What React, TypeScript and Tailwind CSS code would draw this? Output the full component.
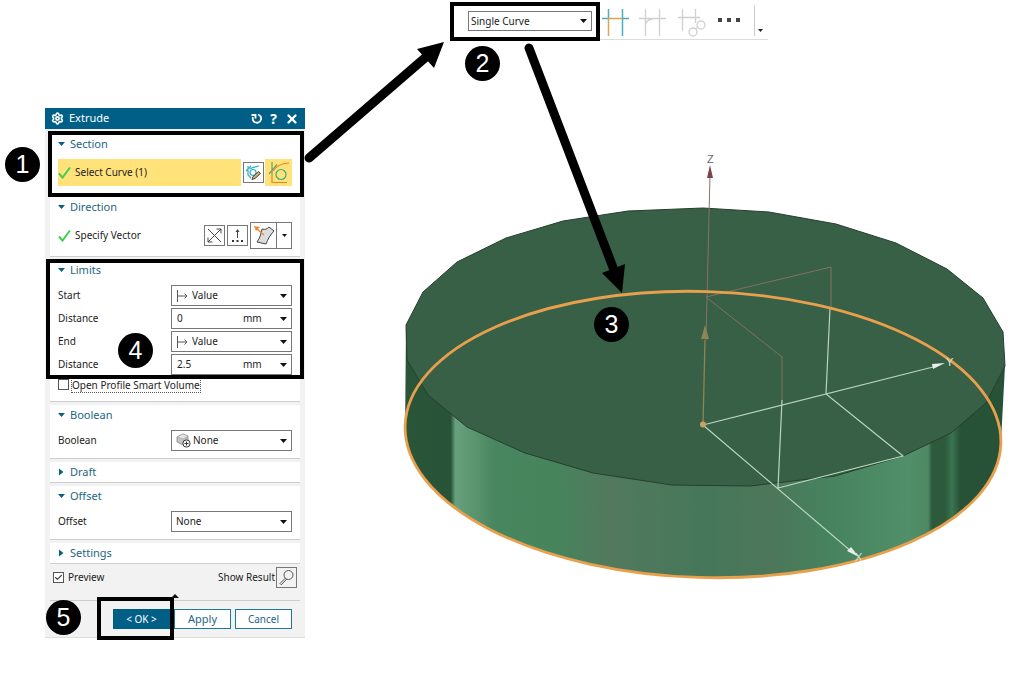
import React, { useState } from 'react';
import { Settings, X, Check } from 'lucide-react';

type SectionProps = {
  title: string;
  open?: boolean;
  children?: React.ReactNode;
};

const Section: React.FC<SectionProps> = ({ title, open = false, children }) => (
  <section className="bg-white border-b border-[#cfcfcf] px-2">
    <h2>
      <button className="flex items-center gap-[5px] h-5 text-[11px] text-[#1d6580]" aria-expanded={open}>
        <svg width="7" height="8" viewBox="0 0 7 8" fill="#0b5f80" aria-hidden="true">
          {open ? <path d="M0 2h7L3.500 6z" /> : <path d="M1 0.500v7L5.500 4z" />}
        </svg>
        {title}
      </button>
    </h2>
    {open && <div className="pt-[5px] pb-[7px]">{children}</div>}
  </section>
);

const Caret: React.FC = () => (
  <svg width="7" height="4" viewBox="0 0 7 4" className="shrink-0" aria-hidden="true">
    <path d="M0 0h7L3.500 4z" fill="#111" />
  </svg>
);

const Tick: React.FC = () => (
  <svg width="13" height="13" viewBox="0 0 13 13" fill="none" className="shrink-0" aria-hidden="true">
    <path d="M1 7.500l3.500 4L12 1.500" stroke="#3fce4c" strokeWidth="2" />
  </svg>
);

type DropDownProps = {
  id: string;
  label?: string;
  options: string[];
  icon?: React.ReactNode;
  className?: string;
};

const DropDown: React.FC<DropDownProps> = ({ id, label, options, icon, className = 'w-[121px] h-[21px] pl-1' }) => (
  <div className={`relative flex items-center bg-white border border-[#777] ${className}`}>
    {icon}
    <select id={id} aria-label={label} className="appearance-none flex-1 min-w-0 h-full bg-transparent outline-none">
      {options.map((o) => (
        <option key={o}>{o}</option>
      ))}
    </select>
    <span className="absolute right-1 pointer-events-none flex">
      <Caret />
    </span>
  </div>
);

const ValueIcon = () => (
  <svg width="12" height="14" viewBox="0 0 12 14" fill="none" stroke="#555" className="mr-1 shrink-0">
    <path d="M1.500 1v12M2 7h9M8.500 4.500l2.500 2.500-2.500 2.500" />
  </svg>
);

const CubeIcon = () => (
  <svg width="15" height="15" viewBox="0 0 15 15" className="mr-[2px] shrink-0">
    <path d="M1 4l6-3 5 2v6l-5 3-6-3z" fill="#c4c4c4" stroke="#888" strokeWidth=".8" />
    <path d="M1 4l6-3 5 2-5 3z" fill="#e6e6e6" stroke="#999" strokeWidth=".6" />
    <circle cx="10.500" cy="10.500" r="3.600" fill="#fff" stroke="#333" />
    <path d="M8.500 10.500h4M10.500 8.500v4" stroke="#333" />
  </svg>
);

const SketchIcon = () => (
  <svg width="17" height="17" viewBox="0 0 17 17" fill="none">
    <path d="M1 7l5-5M3 2v9l3 3M5 5c3-2 5-2 9-3" stroke="#2fb0cc" strokeWidth="1.200" />
    <circle cx="8" cy="8.500" r="3" stroke="#2fb0cc" strokeWidth="1.200" />
    <path d="M7 15.500l1-3 5.500-5 2 2-5.500 5z" fill="#c9b36a" stroke="#333" strokeWidth=".9" />
  </svg>
);

const CurveIcon = () => (
  <svg width="27" height="27" viewBox="0 0 27 27" fill="none" strokeWidth="1.200">
    <path d="M7 16v7.500h15M8 12c3-5 8-7.500 16-8" stroke="#ef8424" />
    <path d="M4 15l8-9.500M7 3v13" stroke="#6fa067" />
    <circle cx="16" cy="15.500" r="5" stroke="#3da982" />
  </svg>
);

const DistanceField: React.FC<{ id: string; initial: string }> = ({ id, initial }) => {
  const [value, setValue] = useState(initial);
  return (
    <div className="flex items-center w-[121px] h-[21px] border border-[#777] bg-white pl-[5px] pr-1">
      <input id={id} value={value} onChange={(e) => setValue(e.target.value)} className="w-[66px] outline-none" />
      <span className="flex-1">mm</span>
      <button aria-label="Distance options">
        <Caret />
      </button>
    </div>
  );
};

const Field: React.FC<{ id: string; label: string; children: React.ReactNode }> = ({ id, label, children }) => (
  <div className="flex items-center justify-between">
    <label htmlFor={id}>{label}</label>
    {children}
  </div>
);

const Badge: React.FC<{ n: number; className: string }> = ({ n, className }) => (
  <span
    className={`absolute flex items-center justify-center size-[35px] rounded-full bg-black text-white text-[25px] font-['Liberation_Sans',sans-serif] ${className}`}
  >
    {n}
  </span>
);

const ExtrudeDialog: React.FC = () => {
  const [openProfile, setOpenProfile] = useState(false);
  const [preview, setPreview] = useState(true);

  return (
    <div role="dialog" aria-label="Extrude" className="relative w-[260px] bg-[#f2f2f2] border-b border-[#ddd]">
      <header className="flex items-center h-[21px] bg-[#005f87] text-white px-[6px]">
        <Settings size={13} strokeWidth={3} />
        <h1 className="ml-[5px] text-[11px] flex-1">Extrude</h1>
        <div className="flex items-center gap-2">
          <button aria-label="Reset">
            <svg width="11" height="11" viewBox="0 0 11 11" fill="none" stroke="#fff" strokeWidth="1.800">
              <path d="M7 1.500a4.200 4.200 0 1 1-5 2.500M0.500 2h4v3.500" />
            </svg>
          </button>
          <button aria-label="Help" className="text-[14px] leading-4 font-bold">?</button>
          <button aria-label="Close"><X size={14} strokeWidth={4} /></button>
        </div>
      </header>

      <div className="flex flex-col gap-[3px] px-[5px] pt-[5px]">
        <Section title="Section" open>
          <div className="flex items-center justify-between h-[27px]">
            <div className="flex items-center gap-1 w-[183px] h-full bg-[#ffe27a]">
              <Tick />
              Select Curve (1)
            </div>
            <button aria-label="Sketch section" className="flex items-center justify-center size-[21px] bg-white border border-[#777]">
              <SketchIcon />
            </button>
            <button aria-label="Curve" className="flex items-center justify-center size-[27px] bg-[#ffe27a]">
              <CurveIcon />
            </button>
          </div>
        </Section>

        <Section title="Direction" open>
          <div className="flex items-center gap-[2px] h-[27px]">
            <div className="flex flex-1 items-center gap-1">
              <Tick />
              Specify Vector
            </div>
            <button aria-label="Reverse direction" className="flex items-center justify-center size-[21px] border border-[#777]">
              <svg width="17" height="17" viewBox="0 0 17 17" fill="none" stroke="#444">
                <path d="M2 15L15 2M2 2l13 13M10.500 2H15v4.500M2 10.500V15h4.500" />
              </svg>
            </button>
            <button aria-label="Vector dialog" className="flex items-center justify-center size-[21px] border border-[#777]">
              <svg width="17" height="17" viewBox="0 0 17 17">
                <path d="M8.500 11V4" stroke="#444" />
                <path d="M6.500 5l2-3 2 3z" fill="#444" />
                <path d="M3 13h2v2H3zM7.500 13h2v2h-2zM12 13h2v2h-2z" fill="#333" />
              </svg>
            </button>
            <div className="flex h-[27px] border border-[#777]">
              <button aria-label="Inferred vector" className="flex items-center justify-center w-[25px]">
                <svg width="23" height="23" viewBox="0 0 23 23">
                  <path d="M10 5c3 1 5 0 7-2l5 4c-4 4-6 8-8 13l-9-2c3-4 4-8 5-13z" fill="#ddd" stroke="#444" />
                  <path d="M12 11L4 4" stroke="#f08a2c" strokeWidth="1.400" />
                  <path d="M2 2l6 1-4 4z" fill="#f08a2c" />
                </svg>
              </button>
              <button aria-label="Vector types" className="flex items-center justify-center w-[15px] border-l border-[#777]">
                <svg width="5" height="3" viewBox="0 0 5 3"><path d="M0 0h5L2.500 3z" fill="#111" /></svg>
              </button>
            </div>
          </div>
        </Section>

        <Section title="Limits" open>
          <div className="flex flex-col gap-[2px]">
            <Field id="start" label="Start">
              <DropDown id="start" options={['Value', 'Symmetric Value']} icon={<ValueIcon />} />
            </Field>
            <Field id="start-distance" label="Distance">
              <DistanceField id="start-distance" initial="0" />
            </Field>
            <Field id="end" label="End">
              <DropDown id="end" options={['Value', 'Symmetric Value']} icon={<ValueIcon />} />
            </Field>
            <Field id="end-distance" label="Distance">
              <DistanceField id="end-distance" initial="2.5" />
            </Field>
          </div>
          <label className="flex items-center gap-[2px] h-[19px]">
            <input
              type="checkbox"
              checked={openProfile}
              onChange={(e) => setOpenProfile(e.target.checked)}
              className="appearance-none size-[11px] border border-[#555] bg-white"
            />
            <span className="border border-dotted border-[#555] leading-[14px]">Open Profile Smart Volume</span>
          </label>
        </Section>

        <Section title="Boolean" open>
          <Field id="boolean" label="Boolean">
            <DropDown id="boolean" options={['None', 'Unite', 'Subtract']} icon={<CubeIcon />} />
          </Field>
        </Section>
        <Section title="Draft" />
        <Section title="Offset" open>
          <Field id="offset" label="Offset">
            <DropDown id="offset" options={['None', 'Single-Sided']} />
          </Field>
        </Section>
        <Section title="Settings" />

        <div className="flex items-center justify-between h-5 pl-[3px] pr-[3px]">
          <label className="flex items-center gap-1">
            <span className="relative flex">
              <input
                type="checkbox"
                checked={preview}
                onChange={(e) => setPreview(e.target.checked)}
                className="appearance-none size-[11px] border border-[#555] bg-white"
              />
              {preview && <Check size={9} strokeWidth={3} className="absolute left-px top-px text-[#444] pointer-events-none" />}
            </span>
            Preview
          </label>
          <div className="flex items-center gap-px">
            <label htmlFor="show-result">Show Result</label>
            <button id="show-result" aria-label="Show result" className="flex items-center justify-center size-[21px] border border-[#777]">
              <svg width="17" height="17" viewBox="0 0 17 17" fill="none" stroke="#555">
                <circle cx="10.500" cy="6" r="4.500" />
                <path d="M7.500 9L2 14.500l1.300 1.300L8.800 10" />
              </svg>
            </button>
          </div>
        </div>
      </div>

      <footer className="mx-[5px] mt-[13px] flex justify-end gap-1 border-t border-[#ccc] pt-2 pb-2 pr-2 text-[11px]">
        <button className="w-[57px] h-5 bg-[#005f87] text-white text-[10px]">&lt; OK &gt;</button>
        <button className="w-[57px] h-5 bg-white border border-[#1f7899] text-[#1d6580]">Apply</button>
        <button className="w-[57px] h-5 bg-white border border-[#1f7899] text-[#1d6580] text-[10px]">Cancel</button>
      </footer>

      {/* Callout frames */}
      <div className="absolute left-[3px] top-[23px] w-[256px] h-[66px] border-4 border-black pointer-events-none" />
      <div className="absolute left-px top-[151px] w-[258px] h-[120px] border-4 border-black pointer-events-none" />
      <div className="absolute left-[52px] bottom-[-3px] w-[77px] h-[43px] border-4 border-black pointer-events-none" />
      <svg width="8" height="4" viewBox="0 0 8 4" className="absolute left-[126px] bottom-[39px]">
        <path d="M4 0l4 4H0z" fill="#111" />
      </svg>
    </div>
  );
};

const Toolbar: React.FC = () => (
  <div className="flex w-[318px] mt-[2px]">
    <div className="flex w-[150px] h-[39px] border-4 border-black pl-[14px] pt-[5px]">
      <DropDown id="curve-rule" label="Curve rule" options={['Single Curve', 'Connected Curves']} className="w-[124px] h-5 pl-[2px]" />
    </div>
    <div className="flex flex-1 h-[38px] border-b border-[#ddd] pt-[3px]">
      <button aria-label="Stop at intersection">
        <svg width="30" height="30" viewBox="0 0 30 30" fill="none" strokeWidth="1.500">
          <path d="M2 11.500h6M22 11.500h7M22.500 2v27M8.500 2v10" stroke="#49adc4" />
          <path d="M8 11.500h14M8.500 12v17" stroke="#dda552" />
        </svg>
      </button>
      <button aria-label="Follow fillet" className="ml-[7px]">
        <svg width="30" height="30" viewBox="0 0 30 30" fill="none" stroke="#d0d0d0" strokeWidth="1.300">
          <path d="M2 11.500h27M8.500 2v27M22.500 2v27M8.500 19c0-4 3-7 7-7" />
        </svg>
      </button>
      <button aria-label="Chain within feature" className="ml-[9px]">
        <svg width="30" height="30" viewBox="0 0 30 30" fill="none" stroke="#d0d0d0" strokeWidth="1.300">
          <path d="M2 10.500h22M6.500 2v22M19.500 2v14M19 22l3-2" />
          <circle cx="17" cy="25" r="4" />
          <circle cx="25" cy="18" r="4" />
        </svg>
      </button>
      <button aria-label="More" className="ml-[12px] flex items-center gap-[5px] h-[30px]">
        <span className="size-1 bg-[#444]" />
        <span className="size-1 bg-[#444]" />
        <span className="size-1 bg-[#444]" />
      </button>
      <button aria-label="Toolbar options" className="ml-[14px] flex items-end h-[31px] border-l border-[#ccc] pl-[3px] pb-1">
        <svg width="5" height="3" viewBox="0 0 5 3"><path d="M0 0h5L2.500 3z" fill="#222" /></svg>
      </button>
    </div>
  </div>
);

const Model: React.FC = () => (
  <svg width="624" height="450" viewBox="400 145 624 450" fill="none" className="block" role="img" aria-label="Extruded disc">
    <defs>
      <linearGradient id="side" gradientUnits="userSpaceOnUse" x1="405" y1="0" x2="1005" y2="0">
        <stop offset="0" stopColor="#2a5539" />
        <stop offset=".076" stopColor="#285338" />
        <stop offset=".084" stopColor="#67a07c" />
        <stop offset=".11" stopColor="#5d9772" />
        <stop offset=".15" stopColor="#48865f" />
        <stop offset=".25" stopColor="#46845c" />
        <stop offset=".34" stopColor="#52795d" />
        <stop offset=".5" stopColor="#46775a" />
        <stop offset=".61" stopColor="#4d765a" />
        <stop offset=".7" stopColor="#46825d" />
        <stop offset=".84" stopColor="#508f69" />
        <stop offset=".872" stopColor="#4d8863" />
        <stop offset=".878" stopColor="#2d5a3c" />
        <stop offset=".9" stopColor="#2c5a3b" />
        <stop offset=".912" stopColor="#3a7450" />
        <stop offset=".925" stopColor="#285237" />
        <stop offset="1" stopColor="#275237" />
      </linearGradient>
    </defs>
    <path d="M406 325L405.100 425.400A298 143 1.750 0 0 1000.900 443.600L1005 366z" fill="url(#side)" />
    <path
      d="M406 325L423 292 457 262 506 238 563 221 628 211 703 208 769 212 836 224 896 243 947 269 983 298 1003 332 1005 366 986 403 951 433 903 456 835 476 750 486 672 485 593 473 525 453 467 427 428 395 407 360z"
      fill="#386046"
      stroke="#263f2e"
      strokeWidth="1"
    />
    {/* Datum axes and planes */}
    <path d="M710 175L706 340" stroke="#8a6f6b" />
    <path d="M706 297L831 267V308M706 297L782 357V400" stroke="#85705f" />
    <path d="M705 340L703 425" stroke="#8e8458" strokeWidth="1.300" />
    <path d="M830 308L826 394 903 456 778 488 782 400M703 425L937 366M703 425L852 552" stroke="#b8d5c2" strokeWidth="1.200" />
    <ellipse cx="703" cy="434.500" rx="298" ry="143" transform="rotate(1.750 703 434.500)" stroke="#e8a04c" strokeWidth="2.800" />
    <path d="M710 165l3 13h-6z" fill="#7d4348" />
    <path d="M705 325l4 14h-8z" fill="#8e8458" />
    <path d="M945 363l-13 1 1 5zM859 557l-12-6 4-4z" fill="#e6efe9" />
    <circle cx="703" cy="424.500" r="3" fill="#c9a262" />
    <g fontFamily="Liberation Sans, sans-serif" fontSize="11">
      <text x="707" y="163" fill="#666">Z</text>
      <text x="946" y="366" fill="#d8e4dc">Y</text>
      <text x="855" y="561" fill="#d8e4dc">X</text>
    </g>
  </svg>
);

export default function App() {
  return (
    <main className="relative min-h-screen flex items-start overflow-hidden bg-white text-[10px] text-[#222] font-['Noto_Sans',sans-serif]">
      <div className="shrink-0 pl-[45px] pt-[108px]">
        <ExtrudeDialog />
      </div>
      <div className="flex-1 min-w-0 pl-[95px]">
        <div className="pl-[50px]">
          <Toolbar />
        </div>
        <div className="pt-[104px]">
          <Model />
        </div>
      </div>

      {/* Walkthrough arrows */}
      <svg width="640" height="300" viewBox="0 0 640 300" className="absolute left-0 top-0 pointer-events-none" aria-hidden="true">
        <path d="M309 158L426 57M529 48L614 270" stroke="#000" strokeWidth="9" strokeLinecap="round" />
        <path d="M444 42L434 68 417 49zM622 293L602 273 625 264z" />
      </svg>
      <Badge n={1} className="left-[5px] top-[147px]" />
      <Badge n={2} className="left-[465px] top-[46px]" />
      <Badge n={3} className="left-[594px] top-[307px]" />
      <Badge n={4} className="left-[118px] top-[333px]" />
      <Badge n={5} className="left-[46px] top-[600px]" />
    </main>
  );
}
